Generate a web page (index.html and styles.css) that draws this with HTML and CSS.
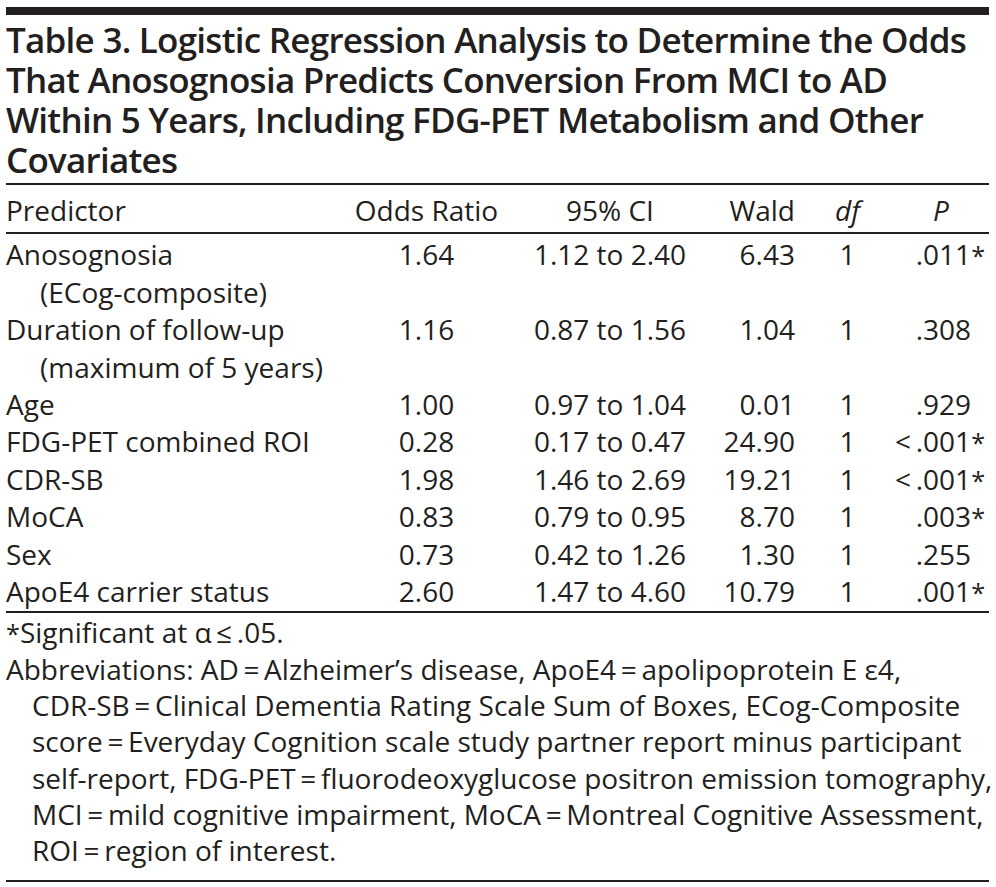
FILE: index.html
```html
<!DOCTYPE html>
<html lang="en">
<head>
<meta charset="utf-8">
<title>Table 3</title>
<link rel="stylesheet" href="styles.css">
</head>
<body>
<div class="page">
  <div class="top-rule"></div>
  <h1 class="title"><span class="tl">Table 3. Logistic Regression Analysis to Determine the Odds</span><span class="tl">That Anosognosia Predicts Conversion From MCI to AD</span><span class="tl">Within 5 Years, Including FDG-PET Metabolism and Other</span><span class="tl">Covariates</span></h1>
  <table class="data">
    <colgroup>
      <col class="w-pred"><col class="w-or"><col class="w-ci"><col class="w-wald"><col class="w-df"><col class="w-p">
    </colgroup>
    <thead>
      <tr>
        <th class="pred">Predictor</th>
        <th class="ctr">Odds Ratio</th>
        <th class="ctr">95% CI</th>
        <th class="rgt wald">Wald</th>
        <th class="ctr"><i>df</i></th>
        <th class="ctr"><i>P</i></th>
      </tr>
    </thead>
    <tbody>
      <tr class="first">
        <td class="pred">Anosognosia<span class="sub">(ECog-composite)</span></td>
        <td class="ctr">1.64</td><td class="ctr">1.12 to 2.40</td><td class="rgt wald">6.43</td><td class="ctr">1</td><td class="rgt pv">.011<span class="ast">*</span></td>
      </tr>
      <tr>
        <td class="pred">Duration of follow-up<span class="sub">(maximum of 5 years)</span></td>
        <td class="ctr">1.16</td><td class="ctr">0.87 to 1.56</td><td class="rgt wald">1.04</td><td class="ctr">1</td><td class="rgt pv">.308<span class="ast hid">*</span></td>
      </tr>
      <tr>
        <td class="pred">Age</td>
        <td class="ctr">1.00</td><td class="ctr">0.97 to 1.04</td><td class="rgt wald">0.01</td><td class="ctr">1</td><td class="rgt pv">.929<span class="ast hid">*</span></td>
      </tr>
      <tr>
        <td class="pred">FDG-PET combined ROI</td>
        <td class="ctr">0.28</td><td class="ctr">0.17 to 0.47</td><td class="rgt wald">24.90</td><td class="ctr">1</td><td class="rgt pv">&lt;&thinsp;.001<span class="ast">*</span></td>
      </tr>
      <tr>
        <td class="pred">CDR-SB</td>
        <td class="ctr">1.98</td><td class="ctr">1.46 to 2.69</td><td class="rgt wald">19.21</td><td class="ctr">1</td><td class="rgt pv">&lt;&thinsp;.001<span class="ast">*</span></td>
      </tr>
      <tr>
        <td class="pred">MoCA</td>
        <td class="ctr">0.83</td><td class="ctr">0.79 to 0.95</td><td class="rgt wald">8.70</td><td class="ctr">1</td><td class="rgt pv">.003<span class="ast">*</span></td>
      </tr>
      <tr>
        <td class="pred">Sex</td>
        <td class="ctr">0.73</td><td class="ctr">0.42 to 1.26</td><td class="rgt wald">1.30</td><td class="ctr">1</td><td class="rgt pv">.255<span class="ast hid">*</span></td>
      </tr>
      <tr class="last">
        <td class="pred">ApoE4 carrier status</td>
        <td class="ctr">2.60</td><td class="ctr">1.47 to 4.60</td><td class="rgt wald">10.79</td><td class="ctr">1</td><td class="rgt pv">.001<span class="ast">*</span></td>
      </tr>
    </tbody>
  </table>
  <div class="notes">
    <p class="note"><span class="ast">*</span>Significant at α&thinsp;≤&thinsp;.05.</p>
    <p class="note hang"><span class="nl">Abbreviations: AD&thinsp;=&thinsp;Alzheimer’s disease, ApoE4&thinsp;=&thinsp;apolipoprotein E ε4,</span><span class="nl">CDR-SB&thinsp;=&thinsp;Clinical Dementia Rating Scale Sum of Boxes, ECog-Composite</span><span class="nl">score&thinsp;=&thinsp;Everyday Cognition scale study partner report minus participant</span><span class="nl">self-report, FDG-PET&thinsp;=&thinsp;fluorodeoxyglucose positron emission tomography,</span><span class="nl">MCI&thinsp;=&thinsp;mild cognitive impairment, MoCA&thinsp;=&thinsp;Montreal Cognitive Assessment,</span><span class="nl">ROI&thinsp;=&thinsp;region of interest.</span></p>
  </div>
</div>
</body>
</html>
```

FILE: styles.css
```css
html, body {
  margin: 0;
  padding: 0;
  background: #ffffff;
}

body {
  font-family: "Open Sans", "Noto Sans", "Liberation Sans", sans-serif;
  color: #231f20;
}

.page {
  width: 983px;
  margin: 7px 0 0 6px;
}

.top-rule {
  height: 0;
  border-top: 8px solid #231f20;
}

.title {
  margin: 5px 0 3px 0;
  font-size: 35px;
  font-weight: 600;
  line-height: 40px;
  letter-spacing: -0.75px;
}

.tl {
  display: block;
  white-space: nowrap;
}

.data {
  width: 983px;
  table-layout: fixed;
  border-collapse: collapse;
  font-size: 28px;
  line-height: 37.4px;
  letter-spacing: 0;
  border-top: 2px solid #231f20;
  border-bottom: 2px solid #231f20;
}

.w-pred { width: 319px; }
.w-or { width: 203px; }
.w-ci { width: 164px; }
.w-wald { width: 110px; }
.w-df { width: 91px; }
.w-p { width: 96px; }

.data th {
  font-weight: 400;
  padding: 7px 0 3px 0;
  border-bottom: 2px solid #231f20;
  white-space: nowrap;
}

.data td {
  padding: 0;
  vertical-align: top;
  white-space: nowrap;
}

.data tr.first td {
  padding-top: 2px;
}

.data tr.last td {
  padding-bottom: 1px;
}

.pred { text-align: left; }
.ctr { text-align: center; }
.rgt { text-align: right; }
.data .wald { padding-right: 7px; }
.data .pv { padding-right: 4px; }

.sub {
  display: block;
  padding-left: 34px;
}

.ast {
  font-size: 0.9em;
  line-height: 0;
}

.ast.hid { visibility: hidden; }

.notes {
  font-size: 28px;
  line-height: 36.3px;
  letter-spacing: 0;
  padding-top: 1px;
  padding-bottom: 11px;
  border-bottom: 2px solid #231f20;
}

.note {
  margin: 0;
  white-space: nowrap;
}

.nl { display: block; }

.hang .nl + .nl {
  padding-left: 26px;
}
```
